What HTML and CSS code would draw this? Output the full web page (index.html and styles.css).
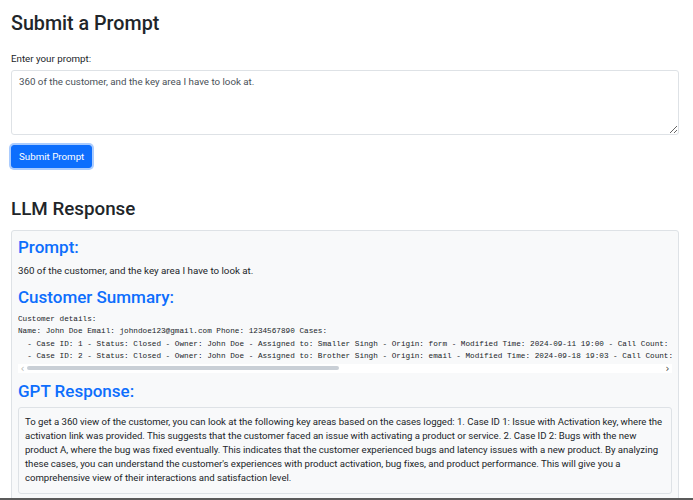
FILE: index.html
```html
<!DOCTYPE html>
<html lang="en">
<head>
<meta charset="utf-8">
<title>Submit a Prompt</title>
<link rel="stylesheet" href="styles.css">
</head>
<body>
<main class="page">
  <h1 class="title">Submit a Prompt</h1>
  <form class="prompt-form">
    <label class="label" for="prompt">Enter your prompt:</label>
    <textarea id="prompt" class="prompt-input">360 of the customer, and the key area I have to look at.</textarea>
    <button type="button" class="btn-primary">Submit Prompt</button>
  </form>

  <h2 class="subtitle">LLM Response</h2>
  <section class="response">
    <h3 class="section-title">Prompt:</h3>
    <p class="text">360 of the customer, and the key area I have to look at.</p>

    <h3 class="section-title">Customer Summary:</h3>
    <div class="pre-wrap">
<pre class="summary">Customer details:
Name: John Doe Email: johndoe123@gmail.com Phone: 1234567890 Cases:
  - Case ID: 1 - Status: Closed - Owner: John Doe - Assigned to: Smaller Singh - Origin: form - Modified Time: 2024-09-11 19:00 - Call Count: 0 - Subject: Issue with Activation key - Description: The activation link was provided to the customer and the product was activated successfully after verification.
  - Case ID: 2 - Status: Closed - Owner: John Doe - Assigned to: Brother Singh - Origin: email - Modified Time: 2024-09-18 19:03 - Call Count: 0 - Subject: Bugs with the new product A - Description: Customer reported bugs and latency issues, the bug was fixed eventually by the team.</pre>
      <div class="hscroll">
        <span class="hs-arrow dim">&#8249;</span>
        <div class="hs-track"><div class="hs-thumb"></div></div>
        <span class="hs-arrow">&#8250;</span>
      </div>
    </div>

    <h3 class="section-title">GPT Response:</h3>
    <div class="gpt-box">To get a 360 view of the customer, you can look at the following key areas based on the cases logged: 1. Case ID 1: Issue with Activation key, where the activation link was provided. This suggests that the customer faced an issue with activating a product or service. 2. Case ID 2: Bugs with the new product A, where the bug was fixed eventually. This indicates that the customer experienced bugs and latency issues with a new product. By analyzing these cases, you can understand the customer's experiences with product activation, bug fixes, and product performance. This will give you a comprehensive view of their interactions and satisfaction level.</div>
  </section>
</main>
<div class="window-edge"></div>
</body>
</html>
```
FILE: styles.css
```css
html, body {
  margin: 0;
  padding: 0;
  background: #fff;
}
body {
  font-family: Roboto, "Noto Sans", sans-serif;
  font-size: 9.75px;
  line-height: 15.5px;
  color: #212529;
}
.page {
  padding: 0 14px 0 11px;
}
.title {
  font-size: 19.7px;
  font-weight: 500;
  line-height: 25px;
  margin: 11px 0 0;
}
.prompt-form {
  display: flex;
  flex-direction: column;
  align-items: flex-start;
}
.label {
  margin-top: 15px;
  display: block;
}
.prompt-input {
  box-sizing: border-box;
  width: 100%;
  height: 65px;
  margin-top: 3px;
  padding: 3px 7px;
  border: 1px solid #dee2e6;
  border-radius: 3px;
  font-family: inherit;
  font-size: 9.75px;
  line-height: 15.5px;
  color: #495057;
  resize: vertical;
}
.btn-primary {
  margin-top: 10px;
  padding: 3px 7px;
  border: 1px solid #0d6efd;
  border-radius: 3px;
  background: #0d6efd;
  color: #fff;
  font-family: inherit;
  font-size: 9.75px;
  line-height: 15.5px;
  box-shadow: 0 0 0 2px rgba(13, 110, 253, 0.35);
}
.subtitle {
  font-size: 18.8px;
  font-weight: 500;
  line-height: 24px;
  margin: 29px 0 0;
}
.response {
  margin-top: 9px;
  border: 1px solid #dee2e6;
  border-radius: 3px;
  background: #f8f9fa;
  padding: 6px 6px 10px 6px;
}
.section-title {
  font-size: 17px;
  font-weight: 500;
  line-height: 21px;
  color: #0d6efd;
  margin: 8px 0 0;
}
.section-title:first-child {
  margin-top: 0;
}
.text {
  margin: 5px 0 0;
}
.pre-wrap {
  margin-top: 5px;
}
.summary {
  margin: 0;
  font-family: "Liberation Mono", "DejaVu Sans Mono", monospace;
  font-size: 7.7px;
  line-height: 12.5px;
  color: #212529;
  white-space: pre;
  overflow: hidden;
}
.hscroll {
  display: flex;
  align-items: center;
  height: 9px;
  background: #fff;
  margin-top: 1px;
}
.hs-arrow {
  width: 9px;
  text-align: center;
  font-family: "DejaVu Sans", sans-serif;
  font-size: 10px;
  line-height: 9px;
  color: #444;
}
.hs-arrow.dim {
  color: #b5b5b5;
}
.hs-track {
  flex: 1;
  height: 4px;
}
.hs-thumb {
  width: 49%;
  height: 100%;
  border-radius: 2px;
  background: #c9cfd6;
}
.gpt-box {
  margin-top: 5px;
  border: 1px solid #dee2e6;
  border-radius: 3px;
  background: #f8f9fa;
  padding: 7px 6px;
  font-size: 9.6px;
  letter-spacing: -0.02px;
  line-height: 14.2px;
}
.window-edge {
  position: fixed;
  left: 0;
  right: 0;
  bottom: 0;
  height: 2px;
  background: #5b5b5b;
}
```
